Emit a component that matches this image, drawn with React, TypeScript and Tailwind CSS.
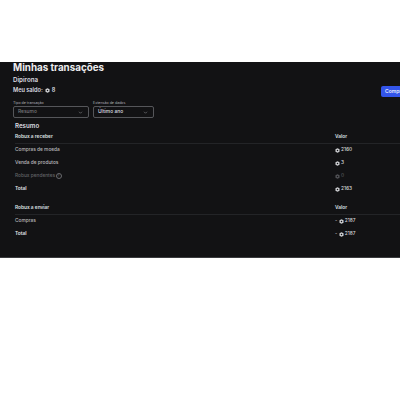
const font = { fontFamily: "Inter, 'Noto Sans', sans-serif" };

function Coin({ className = "" }: { className?: string }) {
  return (
    <svg viewBox="0 0 10 10" className={`w-[5px] h-[5px] shrink-0 ${className}`}>
      <path d="M5 .4 9 2.7v4.6L5 9.6 1 7.3V2.7z" fill="currentColor" />
      <rect x="3.6" y="3.6" width="2.8" height="2.8" fill="#121214" />
    </svg>
  );
}

function Chevron() {
  return (
    <svg viewBox="0 0 10 10" className="w-[5px] h-[5px] text-[#8a8b90]" fill="none" stroke="currentColor" strokeWidth="1.2">
      <path d="M2 3.5 5 6.5 8 3.5" />
    </svg>
  );
}

function Select({ label, value, dim, width }: { label: string; value: string; dim?: boolean; width: string }) {
  return (
    <div className={`flex flex-col ${width}`}>
      <span className="text-[3.6px] leading-[5px] text-[#b4b5b9]">{label}</span>
      <div className="mt-[0.5px] h-[12px] flex items-center justify-between rounded-[2px] border border-[#55565a] pl-[4px] pr-[5px]">
        <span className={`text-[4.9px] font-medium ${dim ? "text-[#77787c]" : "text-[#dcdde0]"}`}>{value}</span>
        <Chevron />
      </div>
    </div>
  );
}

function Row({ label, value, negative, muted, bold, help }: { label: string; value: string; negative?: boolean; muted?: boolean; bold?: boolean; help?: boolean }) {
  const color = muted ? "text-[#626367]" : bold ? "text-[#e6e7ea]" : "text-[#b9babd]";
  return (
    <div className={`h-[13px] flex items-center text-[4.8px] ${color} ${bold ? "font-semibold" : "font-medium"}`}>
      <div className="w-[320px] flex items-center gap-[0.5px]">
        {label}
        {help && (
          <span className="w-[6px] h-[6px] rounded-full border-[0.5px] border-[#6a6b6f] text-[3.8px] leading-none flex items-center justify-center">?</span>
        )}
      </div>
      <div className={`flex items-center gap-[1px] font-medium ${muted ? "text-[#55565a]" : "text-[#d8d9dc]"}`}>
        {negative && <span className="mr-[0.5px]">-</span>}
        <Coin />
        <span>{value}</span>
      </div>
    </div>
  );
}

function Header({ label }: { label: string }) {
  return (
    <div className="h-[13px] flex items-center border-b border-[#232427] text-[4.8px] font-semibold text-[#dfe0e3]">
      <div className="w-[320px]">{label}</div>
      <div>Valor</div>
    </div>
  );
}

export default function App() {
  return (
    <div className="w-[400px] h-[400px] bg-white overflow-hidden" style={font}>
      <div className="h-[62px]" />
      <div className="h-[196px] bg-[#121214] border-b border-[#3a3b3e] overflow-hidden pl-[13px] flex flex-col">
        <div className="h-[11px] flex items-end">
          <h1 className="text-[9.8px] leading-[11px] font-bold text-[#ececee] whitespace-nowrap">Minhas transações</h1>
        </div>
        <div className="mt-[2px] text-[6.2px] leading-[9px] font-semibold text-[#dcdde0]">Dipirona</div>
        <div className="relative h-[12px] flex items-center gap-[2px] text-[5.6px] font-semibold text-[#dcdde0]">
          <span>Meu saldo:</span>
          <Coin />
          <span>8</span>
          <div className="absolute left-[368px] top-[2px] w-[40px] h-[11px] rounded-[2px] bg-[#3355ea] text-white text-[5px] font-medium flex items-center pl-[4px]">Comprar</div>
        </div>
        <div className="mt-[4.5px] flex gap-[4px]">
          <Select label="Tipo de transação" value="Resumo" dim width="w-[76px]" />
          <Select label="Extensão de dados" value="Último ano" width="w-[61px]" />
        </div>
        <div className="mt-[2.5px] ml-[2px] text-[6.2px] leading-[9px] font-semibold text-[#dcdde0]">Resumo</div>
        <div className="mt-[1px] ml-[2px] w-[420px]">
          <Header label="Robux a receber" />
          <Row label="Compras de moeda" value="2160" />
          <Row label="Venda de produtos" value="3" />
          <Row label="Robux pendentes" value="0" muted help />
          <Row label="Total" value="2163" bold />
          <div className="h-[6px]" />
          <Header label="Robux a enviar" />
          <Row label="Compras" value="2187" negative />
          <Row label="Total" value="2187" negative bold />
        </div>
      </div>
    </div>
  );
}
